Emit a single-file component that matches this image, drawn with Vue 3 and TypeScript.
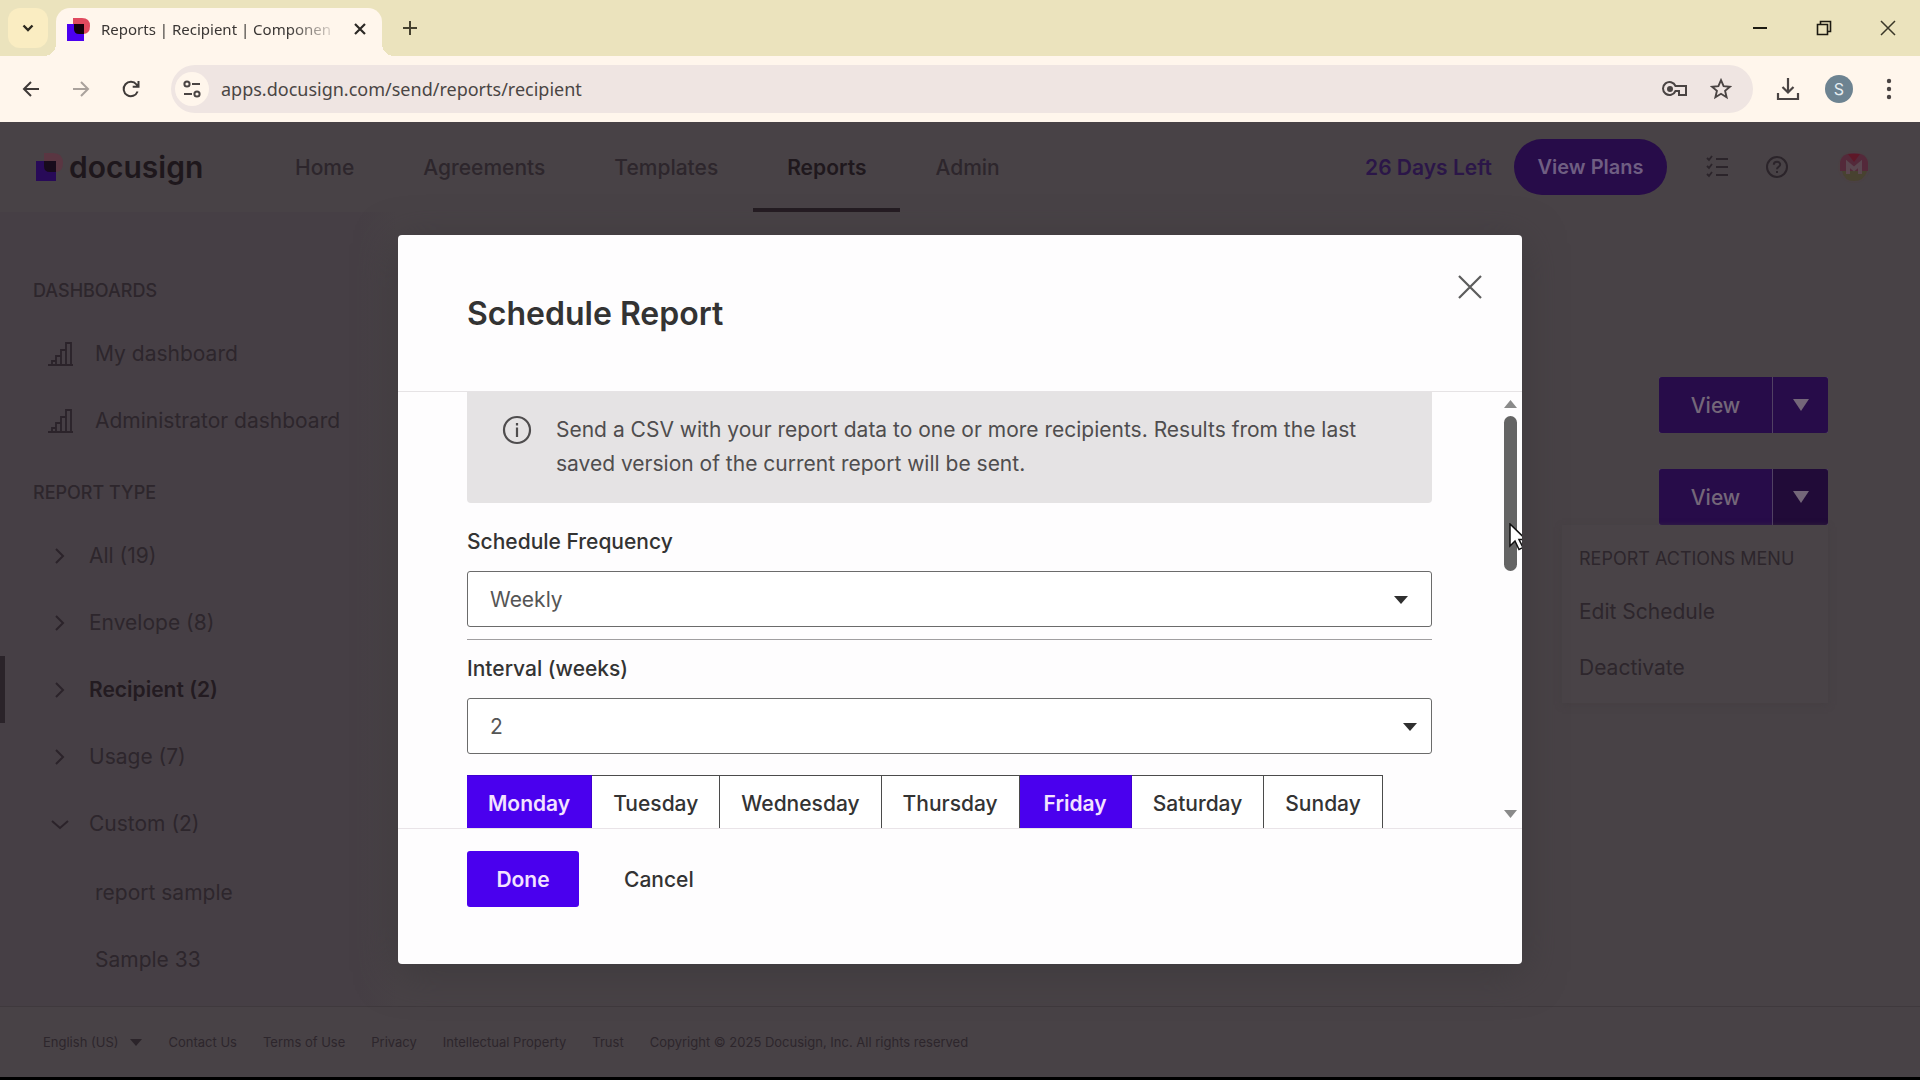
<script setup lang="ts">
import { ref } from 'vue'

interface Day { name: string; on: boolean }
interface NavItem { label: string; active?: boolean }

const nav: NavItem[] = [
  { label: 'Home' },
  { label: 'Agreements' },
  { label: 'Templates' },
  { label: 'Reports', active: true },
  { label: 'Admin' },
]
const dashboards = ['My dashboard', 'Administrator dashboard']
const types = [
  { label: 'All (19)', active: false, open: false },
  { label: 'Envelope (8)', active: false, open: false },
  { label: 'Recipient (2)', active: true, open: false },
  { label: 'Usage (7)', active: false, open: false },
  { label: 'Custom (2)', active: false, open: true },
]
const custom = ['report sample', 'Sample 33']
const footer = ['Contact Us', 'Terms of Use', 'Privacy', 'Intellectual Property', 'Trust']

const address = ref('apps.docusign.com/send/reports/recipient')
const frequency = ref('Weekly')
const interval = ref('2')
const days = ref<Day[]>([
  { name: 'Monday', on: true },
  { name: 'Tuesday', on: false },
  { name: 'Wednesday', on: false },
  { name: 'Thursday', on: false },
  { name: 'Friday', on: true },
  { name: 'Saturday', on: false },
  { name: 'Sunday', on: false },
])
</script>

<template>
  <div class="window">
    <header class="tabstrip">
      <button class="tab-search" aria-label="Search tabs">
        <svg width="12" height="8" viewBox="0 0 12 8"><path d="M1.500 1.500 6 6l4.500-4.500" fill="none" stroke="#2c291f" stroke-width="2.400" /></svg>
      </button>
      <div class="tab">
        <svg class="favicon" width="23" height="23" viewBox="0 0 23 23">
          <path d="M6 0h9q8 0 8 8t-7 8H6z" fill="#e04a5e" />
          <path d="M0 6h17v17H0z" fill="#4c00f0" />
          <path d="M7 6h10v10H12q-5 0-5-5z" fill="#14000a" />
        </svg>
        <span class="tab-title">Reports | Recipient | Componen</span>
        <button class="plain tab-close" aria-label="Close tab">
          <svg width="12" height="12" viewBox="0 0 12 12"><path d="M1 1l10 10M11 1 1 11" stroke="#2c2925" stroke-width="2.200" /></svg>
        </button>
      </div>
      <button class="plain new-tab" aria-label="New tab">
        <svg width="16" height="16" viewBox="0 0 16 16"><path d="M8 1v14M1 8h14" stroke="#45412f" stroke-width="2" /></svg>
      </button>
      <div class="controls">
        <button class="plain" aria-label="Minimize"><svg width="16" height="16" viewBox="0 0 16 16"><path d="M1 8h14" stroke="#1c1a12" stroke-width="2" /></svg></button>
        <button class="plain" aria-label="Restore"><svg width="16" height="16" viewBox="0 0 16 16"><path d="M1.500 4.500h10v10h-10zM4.500 4.500v-3h10v10h-3" fill="none" stroke="#1c1a12" stroke-width="1.600" /></svg></button>
        <button class="plain" aria-label="Close"><svg width="16" height="16" viewBox="0 0 16 16"><path d="M1 1l14 14M15 1 1 15" stroke="#3a3728" stroke-width="1.500" /></svg></button>
      </div>
    </header>

    <div class="toolbar">
      <div class="history">
        <button class="plain" aria-label="Back"><svg width="18" height="18" viewBox="0 0 18 18"><path d="M17 9H2M9 2 2 9l7 7" fill="none" stroke="#3f3a38" stroke-width="2" /></svg></button>
        <button class="plain" aria-label="Forward"><svg width="18" height="18" viewBox="0 0 18 18"><path d="M1 9h15M9 2l7 7-7 7" fill="none" stroke="#aaa29c" stroke-width="2" /></svg></button>
        <button class="plain" aria-label="Reload"><svg width="18" height="18" viewBox="0 0 18 18"><path d="M15.600 11.500A7.200 7.200 0 1 1 14.500 4.500L16.500 6.500M16.500 1v5.800h-5.800" fill="none" stroke="#3f3a38" stroke-width="2" /></svg></button>
      </div>
      <div class="omnibox">
        <button class="plain site-info" aria-label="Site information">
          <svg width="18" height="18" viewBox="0 0 18 18" fill="none" stroke="#4a4443" stroke-width="2"><circle cx="4" cy="4" r="2.600" /><path d="M9 4h8M1 14h8" /><circle cx="14" cy="14" r="2.600" /></svg>
        </button>
        <input v-model="address" class="address" type="text" aria-label="Address" />
        <button class="plain" aria-label="Passwords"><svg width="26" height="18" viewBox="0 0 26 18" fill="none" stroke="#4a4443" stroke-width="2"><path d="M13.500 6A6.500 6.500 0 1 0 13.500 11H17v4h7V6z" /><circle cx="8" cy="9" r="2" fill="#4a4443" /></svg></button>
        <button class="plain" aria-label="Bookmark"><svg width="22" height="22" viewBox="0 0 22 22"><path d="M11 2.200l2.600 6 6.400.5-4.900 4.200 1.500 6.300L11 15.800l-5.600 3.400 1.500-6.300L2 8.700l6.400-.5z" fill="none" stroke="#4a4443" stroke-width="1.900" /></svg></button>
      </div>
      <div class="tools">
        <button class="plain" aria-label="Downloads"><svg width="24" height="24" viewBox="0 0 24 24" fill="none" stroke="#4a4443" stroke-width="2.200"><path d="M12 1v14M6.500 10l5.500 5.500 5.500-5.500M2 16v6h20v-6" /></svg></button>
        <button class="profile">S</button>
        <button class="plain" aria-label="Menu"><svg width="6" height="22" viewBox="0 0 6 22" fill="#4a4443"><circle cx="3" cy="3" r="2.200" /><circle cx="3" cy="11" r="2.200" /><circle cx="3" cy="19" r="2.200" /></svg></button>
      </div>
    </div>

    <div class="viewport">
      <header class="site-header">
        <a class="brand" href="#">
          <svg width="27" height="28" viewBox="0 0 27 28">
            <path d="M8 0h9q10 0 10 10 0 9-8 9H8z" fill="#5a3642" />
            <path d="M0 8h20v20H0z" fill="#280a58" />
            <path d="M8 8h12v11h-6q-6 0-6-6z" fill="#180b1b" />
          </svg>
          <span>docusign</span>
        </a>
        <nav class="nav">
          <a v-for="n in nav" :key="n.label" href="#" :class="{ active: n.active }">{{ n.label }}</a>
        </nav>
        <div class="account">
          <a class="trial" href="#">26 Days Left</a>
          <button class="plans">View Plans</button>
          <button class="plain tasks" aria-label="Tasks"><svg width="24" height="24" viewBox="0 0 24 24" fill="none" stroke="#2b242a" stroke-width="1.800"><path d="M11 4h12M11 12h12M11 20h12M2 3l2 2 3-4M2 11l2 2 3-4M2 19l2 2 3-4" /></svg></button>
          <button class="plain help" aria-label="Help"><svg width="24" height="24" viewBox="0 0 24 24" fill="none" stroke="#2b242a" stroke-width="2"><circle cx="12" cy="12" r="10" /><path d="M8.800 9.800c0-4 6.400-4 6.400-.3 0 2.300-3.200 2.300-3.200 4.800M12 16v2" /></svg></button>
          <button class="plain user" aria-label="Account"><svg width="32" height="32" viewBox="0 0 32 32"><circle cx="16" cy="16" r="16" fill="#4a4144" /><path d="M2 12Q3 2 16 2t14 10v8H2z" fill="#54293a" /><path d="M4 20h25q-3 10-13 10T4 20z" fill="#484230" /><path d="M10 23V13l6 5 6-5v10" fill="none" stroke="#5b4750" stroke-width="4" /><path d="M10 3h12l-6 8z" fill="#5e1828" /></svg></button>
        </div>
      </header>

      <div class="body">
        <aside class="sidebar">
          <h2>DASHBOARDS</h2>
          <a v-for="d in dashboards" :key="d" class="dash" href="#">
            <svg width="25" height="24" viewBox="0 0 25 24" fill="none" stroke="#2b232a" stroke-width="1.800"><path d="M0 23h25M4 23v-4h4M8 23v-9h5M13 23V8h5M18 23V1h5v22" /></svg>
            <span>{{ d }}</span>
          </a>
          <h2 class="second">REPORT TYPE</h2>
          <a v-for="t in types" :key="t.label" class="type" :class="{ active: t.active }" href="#">
            <svg width="18" height="18" viewBox="0 0 18 18" fill="none" stroke="#2b232a" stroke-width="2"><path v-if="t.open" d="M1 6l8 7 8-7" /><path v-else d="M5 2l7 7-7 7" /></svg>
            <span>{{ t.label }}</span>
          </a>
          <div class="sub">
            <a v-for="c in custom" :key="c" href="#">{{ c }}</a>
          </div>
        </aside>
        <main class="reports">
          <div class="split">
            <button class="view">View</button>
            <button class="more" aria-label="More actions"><svg width="16" height="12" viewBox="0 0 16 12"><path d="M0 0h16L8 12z" fill="#746779" /></svg></button>
          </div>
          <div class="split">
            <button class="view">View</button>
            <button class="more open" aria-label="More actions"><svg width="16" height="12" viewBox="0 0 16 12"><path d="M0 0h16L8 12z" fill="#746779" /></svg></button>
            <div class="menu">
              <h3>REPORT ACTIONS MENU</h3>
              <a href="#">Edit Schedule</a>
              <a href="#">Deactivate</a>
            </div>
          </div>
        </main>
      </div>

      <footer class="footer">
        <button class="plain language">English (US) <svg width="12" height="7" viewBox="0 0 12 7"><path d="M0 0h12L6 7z" fill="#2b242a" /></svg></button>
        <a v-for="f in footer" :key="f" href="#">{{ f }}</a>
        <span>Copyright © 2025 Docusign, Inc. All rights reserved</span>
      </footer>

      <div class="backdrop">
        <section class="modal" role="dialog" aria-labelledby="dialog-title">
          <header class="modal-head">
            <h1 id="dialog-title">Schedule Report</h1>
            <button class="plain close" aria-label="Close dialog"><svg width="24" height="24" viewBox="0 0 24 24"><path d="M1 1l22 22M23 1 1 23" stroke="#5c5c5c" stroke-width="2.200" /></svg></button>
          </header>
          <div class="scroller">
            <form class="fields">
              <div class="info">
                <svg width="30" height="30" viewBox="0 0 30 30"><circle cx="15" cy="15" r="13" fill="none" stroke="#4f4d4e" stroke-width="2.200" /><path d="M15 12.500V22M15 8v2.500" stroke="#4f4d4e" stroke-width="2.200" /></svg>
                <p>Send a CSV with your report data to one or more recipients. Results from the last saved version of the current report will be sent.</p>
              </div>
              <label for="frequency">Schedule Frequency</label>
              <div class="select inset-caret">
                <select id="frequency" v-model="frequency"><option>Weekly</option></select>
                <svg width="14" height="8" viewBox="0 0 14 8"><path d="M0 0h14L7 8z" fill="#2f2f2f" /></svg>
              </div>
              <hr />
              <label for="interval">Interval (weeks)</label>
              <div class="select">
                <select id="interval" v-model="interval"><option>2</option></select>
                <svg width="14" height="8" viewBox="0 0 14 8"><path d="M0 0h14L7 8z" fill="#2f2f2f" /></svg>
              </div>
              <div class="days">
                <button v-for="d in days" :key="d.name" type="button" :class="{ on: d.on }" :aria-pressed="d.on" @click="d.on = !d.on">{{ d.name }}</button>
              </div>
            </form>
            <div class="scrollbar">
              <svg width="13" height="8" viewBox="0 0 13 8"><path d="M0 8h13L6.500 0z" fill="#8a8a8a" /></svg>
              <div class="track"><div class="thumb"></div></div>
              <svg width="13" height="8" viewBox="0 0 13 8"><path d="M0 0h13L6.500 8z" fill="#8a8a8a" /></svg>
              <svg class="pointer" width="18" height="28" viewBox="0 0 18 28"><path d="M1 1v22l5-5 4 8.500 4-2-4-8h7z" fill="#fff" stroke="#111" stroke-width="1.500" /></svg>
            </div>
          </div>
          <footer class="modal-foot">
            <button class="done">Done</button>
            <button class="cancel">Cancel</button>
          </footer>
        </section>
      </div>
    </div>
  </div>
</template>

<style>
body { margin: 0; background: #000; }
</style>

<style scoped>
* { box-sizing: border-box; }
.window {
  display: flex;
  flex-direction: column;
  min-height: 100vh;
  padding-bottom: 3px;
  font-family: Inter, sans-serif;
  font-size: 21px;
  background: #000;
}
a { color: inherit; text-decoration: none; }
button { font: inherit; color: inherit; border: 0; cursor: pointer; }
.plain { display: flex; align-items: center; justify-content: center; padding: 0; background: none; }
svg { display: block; flex: none; }

/* Browser chrome */
.tabstrip { display: flex; align-items: center; height: 56px; padding: 0 24px 0 8px; background: #ebe3bd; }
.tab-search { display: flex; align-items: center; justify-content: center; width: 40px; height: 40px; padding: 0; background: #faedc2; border-radius: 12px; }
.tab {
  position: relative;
  display: flex;
  align-items: center;
  align-self: flex-end;
  width: 326px;
  height: 48px;
  margin-left: 8px;
  padding: 0 16px 6px 11px;
  background: #fff6ec;
  border-radius: 14px 14px 0 0;
}
.tab::before, .tab::after {
  content: '';
  position: absolute;
  bottom: 0;
  width: 12px;
  height: 12px;
}
.tab::before { left: -12px; background: radial-gradient(circle at 0 0, transparent 12px, #fff6ec 12px); }
.tab::after { right: -12px; background: radial-gradient(circle at 100% 0, transparent 12px, #fff6ec 12px); }
.tab-title {
  flex: 1;
  min-width: 0;
  margin: 0 18px 0 11px;
  white-space: nowrap;
  font: 15px/24px 'Noto Sans', sans-serif;
  color: #3a3634;
  -webkit-mask-image: linear-gradient(90deg, #000 80%, transparent 102%);
  mask-image: linear-gradient(90deg, #000 80%, transparent 102%);
}
.new-tab { margin-left: 20px; }
.controls { display: flex; gap: 48px; margin-left: auto; }
.toolbar { display: flex; align-items: center; height: 66px; padding: 0 28px 0 22px; background: #fff6ec; }
.history { display: flex; gap: 32px; }
.omnibox { display: flex; align-items: center; flex: 1; height: 48px; margin: 0 23px 0 31px; padding: 0 21px 0 4px; gap: 22px; background: #efe5e2; border-radius: 24px; }
.site-info { width: 34px; height: 34px; background: #fff6ec; border-radius: 17px; margin-right: -10px; }
.address { flex: 1; min-width: 0; padding: 0; border: 0; outline: 0; background: none; font: 18px/28px 'Noto Sans', sans-serif; color: #4a4544; }
.tools { display: flex; align-items: center; gap: 25px; }
.tools button:last-child { margin-left: 8px; }
.profile { width: 28px; height: 28px; padding: 0; border-radius: 14px; background: #6d8391; color: #e6edf0; font-size: 16px; }

/* Dimmed page */
.viewport { position: relative; display: flex; flex-direction: column; flex: 1; background: #484246; color: #2d262c; }
.site-header { display: flex; align-items: stretch; height: 90px; }
.brand { display: flex; align-items: center; gap: 6px; width: 261px; padding-left: 36px; font-size: 30px; font-weight: 600; color: #1e171c; }
.nav { display: flex; gap: 1px; font-weight: 500; }
.nav a { display: flex; align-items: center; padding: 0 34px; border-bottom: 4px solid transparent; border-top: 4px solid transparent; }
.nav .active { color: #1f181d; font-weight: 600; border-bottom-color: #231b21; }
.account { display: flex; align-items: center; margin-left: auto; padding-right: 50px; font-weight: 600; }
.trial { color: #2b1648; }
.plans { width: 153px; height: 56px; margin: 0 38px 0 22px; padding: 0; border-radius: 28px; background: #270c49; color: #6f5e82; font-size: 20px; }
.help { margin: 0 49px 0 36px; }
.body { display: flex; flex: 1; }
.sidebar { width: 398px; padding-top: 67px; background: linear-gradient(90deg, #463f45 90%, #484246); }
.sidebar h2 { margin: 0; padding-left: 33px; font-size: 18px; line-height: 24px; font-weight: 500; }
.sidebar h2.second { margin-top: 27px; }
.dash, .type { display: flex; align-items: center; height: 67px; }
.dash { gap: 22px; padding-left: 48px; }
h2 + .dash { margin-top: 17px; }
h2 + .type { margin-top: 17px; }
.type { gap: 20px; padding-left: 46px; border-left: 5px solid transparent; }
.type.active { border-left-color: #2a2329; font-weight: 600; color: #231b21; }
.sub { margin-top: 2px; }
.sub a { display: flex; align-items: center; height: 67px; padding-left: 95px; }
.reports { display: flex; flex: 1; flex-direction: column; align-items: flex-end; gap: 36px; padding: 165px 92px 0 0; }
.split { position: relative; display: flex; gap: 1px; background: #514163; }
.view, .more { height: 56px; padding: 0; background: #270c49; color: #746779; font-weight: 500; }
.view { width: 113px; border-radius: 3px 0 0 3px; }
.more { display: flex; align-items: center; justify-content: center; width: 55px; border-radius: 0 3px 3px 0; }
.more.open { background: #210b38; }
.menu { position: absolute; top: 56px; right: 0; width: 266px; padding: 16px 0 8px; background: #494347; box-shadow: 0 2px 6px #453f43; }
.menu h3 { margin: 0 0 6px; padding-left: 17px; font-size: 18px; line-height: 36px; font-weight: 400; white-space: nowrap; }
.menu a { display: flex; align-items: center; height: 56px; padding-left: 17px; }
.footer { display: flex; align-items: center; gap: 26px; height: 71px; padding-left: 43px; border-top: 1px solid #3f393d; background: #484246; font-size: 13px; }
.language { gap: 12px; }

/* Dialog */
.backdrop { position: absolute; inset: 0; display: flex; align-items: center; justify-content: center; }
.modal { width: 1124px; max-width: 92%; background: #fefdfe; border-radius: 4px; box-shadow: 0 8px 40px #3e3a3d; color: #333; }
.modal-head { position: relative; display: flex; align-items: center; height: 157px; padding: 2px 69px 0; border-bottom: 1px solid #e6e3e5; }
.modal-head h1 { margin: 0; font-size: 32px; line-height: 40px; font-weight: 600; }
.close { position: absolute; top: 40px; right: 40px; }
.scroller { display: flex; height: 437px; overflow: hidden; border-bottom: 1px solid #e9e4e8; }
.fields { flex: 1; margin: 0 72px 0 69px; }
.info { display: flex; gap: 24px; height: 111px; padding: 21px 60px 0 35px; background: #e5e3e4; border-radius: 0 0 4px 4px; color: #4f4d4e; }
.info svg { margin-top: 2px; }
.info p { margin: 0; line-height: 34px; }
.fields label { display: block; line-height: 28px; font-weight: 500; }
.info + label { margin-top: 25px; }
.select { position: relative; height: 56px; margin-top: 15px; }
.select select { width: 100%; height: 100%; padding: 0 22px; border: 1px solid #6b6b6b; border-radius: 3px; background: #fff; appearance: none; font: inherit; color: #555; }
.select svg { position: absolute; top: 25px; right: 15px; pointer-events: none; }
.select.inset-caret svg { right: 24px; }
hr { height: 1px; margin: 12px 0 15px; border: 0; background: #a09ea0; }
.days { display: flex; margin-top: 21px; }
.days button { min-width: 112px; height: 56px; padding: 0 21px; border: solid #4b4b4b; border-width: 1px 1px 1px 0; background: #fff; font-weight: 500; }
.days .on { background: #4a00ee; border-color: #4000d0; color: #f3e3ff; font-weight: 600; }
.scrollbar { position: relative; display: flex; flex-direction: column; width: 13px; margin-right: 5px; padding: 8px 0 10px; }
.track { flex: 1; padding: 8px 0; }
.thumb { width: 13px; height: 155px; border-radius: 7px; background: #646464; }
.pointer { position: absolute; top: 131px; left: 5px; }
.modal-foot { display: flex; height: 135px; padding: 22px 69px 0; font-weight: 500; }
.done { width: 112px; height: 56px; padding: 0; border-radius: 3px; background: #4a00ee; color: #f3e3ff; font-weight: 600; }
.cancel { height: 56px; margin-left: 20px; padding: 0 25px; background: none; }
</style>
